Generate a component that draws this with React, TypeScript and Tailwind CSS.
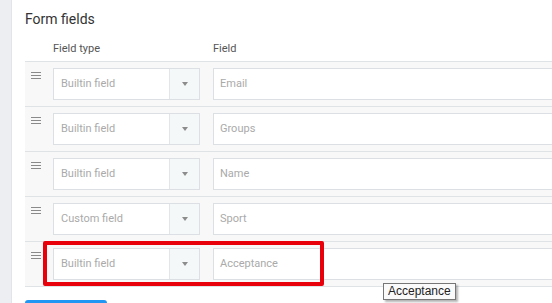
import React from "react";

interface FieldRow {
  type: string;
  field: string;
}

const rows: FieldRow[] = [
  { type: "Builtin field", field: "Email" },
  { type: "Builtin field", field: "Groups" },
  { type: "Builtin field", field: "Name" },
  { type: "Custom field", field: "Sport" },
  { type: "Builtin field", field: "Acceptance" },
];

function DragHandle() {
  return (
    <svg width="10" height="8" viewBox="0 0 10 8" className="mt-[4px] ml-[6px]">
      <path d="M0 0.5H10M0 3.5H10M0 6.5H10" stroke="#8a8a8a" strokeWidth="1" />
    </svg>
  );
}

export default function App() {
  return (
    <div className="relative flex h-[303px] w-[552px] overflow-hidden bg-white font-['Roboto',sans-serif]">
      <div className="w-[12px] shrink-0 border-r border-[#e1e4e8] bg-[#eceef1]" />
      <div className="flex-1 pl-[13px]">
        <h2 className="pt-[9px] text-[14px] leading-[20px] text-[#333]">Form fields</h2>
        <div className="flex pt-[12px] pb-[4px] text-[11px] leading-[16px] text-[#555]">
          <span className="w-[188px] pl-[28px]">Field type</span>
          <span>Field</span>
        </div>
        <div className="border-b border-[#dfe3e6]">
          {rows.map((row) => (
            <div
              key={row.field}
              className="flex h-[45px] border-t border-[#dfe3e6] bg-[#f8f8f8] pt-[6px]"
            >
              <div className="w-[28px] shrink-0">
                <DragHandle />
              </div>
              <div className="flex h-[32px] w-[147px] shrink-0 border border-[#dcdfe3] bg-white">
                <span className="flex flex-1 items-center pl-[7px] text-[11px] text-[#aaaaaa]">
                  {row.type}
                </span>
                <span className="flex w-[30px] items-center justify-center border-l border-[#e3e6e9] bg-[#f5f8f9]">
                  <svg width="6" height="4" viewBox="0 0 6 4">
                    <path d="M0 0H6L3 4Z" fill="#8c8c8c" />
                  </svg>
                </span>
              </div>
              <div className="ml-[13px] flex h-[32px] flex-1 -mr-[10px] items-center border border-[#dcdfe3] bg-white pl-[6px] text-[11px] text-[#aaaaaa]">
                {row.field}
              </div>
            </div>
          ))}
        </div>
        <div className="mt-[13px] h-[8px] w-[82px] rounded-t-[3px] bg-[#2196f3]" />
      </div>

      <div className="absolute left-[43px] top-[241px] h-[45px] w-[281px] rounded-[2px] border-[4px] border-[#e8000b]" />

      <div className="absolute left-[383px] top-[283px] border border-[#767676] bg-[#fafafa] px-[4px] text-[12px] leading-[15px] text-[#222] shadow-[2px_2px_2px_rgba(0,0,0,0.3)] font-['Liberation_Sans',sans-serif]">
        Acceptance
      </div>
    </div>
  );
}
